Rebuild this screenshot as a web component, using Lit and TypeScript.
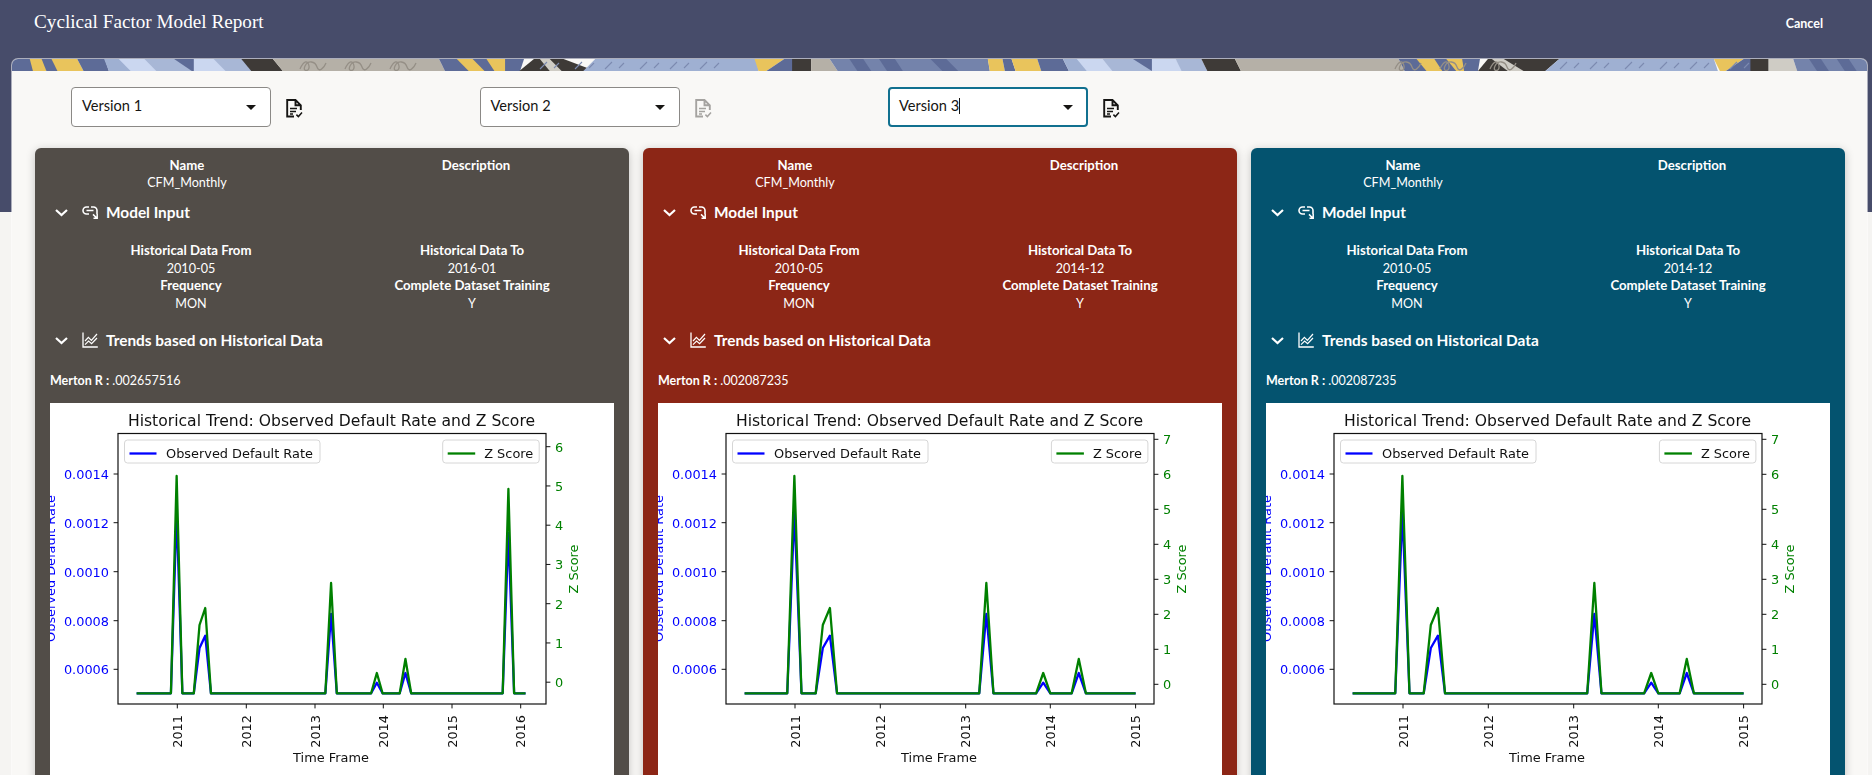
import { LitElement, html, css, svg } from "lit";
import { customElement, property } from "lit/decorators.js";

type Strip = [number, number, number, number, string];
const SLATE = "#5d6b97", YEL = "#e9c45c", BLUE = "#9fb0d2", PALE = "#cbd7f0", MID = "#a8b7d6", DARK = "#3e3a37", GRAY = "#b5b0a7", LGRAY = "#cfccc5", STR = "#7483ab";

// [topStart, topEnd, bottomStart, bottomEnd, colour] in page x
const z1 = (v: number) => 10 + v / 2.529;
const z2 = (v: number) => 630 + v / 2.529;
const z3 = (v: number) => 1250 + v / 2.522;
const mk = (f: (v: number) => number, rows: number[][], cols: string[]): Strip[] =>
  rows.map((r, i) => [f(r[0]), f(r[1]), f(r[2]), f(r[3]), cols[i]] as Strip);

const STRIPS: Strip[] = [
  ...mk(z1, [[0, 60, 0, 60], [50, 85, 58, 92], [80, 120, 92, 125], [105, 170, 120, 186], [170, 240, 186, 250], [238, 280, 250, 310],
    [275, 345, 305, 380], [340, 590, 370, 610], [415, 465, 460, 465], [465, 515, 465, 545], [585, 665, 610, 690], [665, 1085, 690, 1100],
    [1085, 1300, 1100, 1290], [1130, 1170, 1160, 1200], [1205, 1252, 1225, 1252], [1325, 1400, 1288, 1480], [1340, 1365, 1365, 1395], [1480, 1568, 1450, 1568]],
    [SLATE, YEL, SLATE, YEL, SLATE, BLUE, PALE, MID, SLATE, PALE, DARK, GRAY, SLATE, YEL, YEL, DARK, LGRAY, BLUE]),
  ...mk(z2, [[0, 320, 0, 325], [315, 390, 325, 345], [390, 415, 345, 415], [410, 458, 410, 458], [458, 505, 458, 525], [505, 905, 525, 910],
    [555, 590, 575, 610], [630, 670, 650, 690], [760, 800, 790, 830], [905, 942, 910, 948], [942, 965, 948, 975], [965, 1030, 975, 1040], [1030, 1095, 1040, 1110],
    [1095, 1135, 1110, 1165], [1130, 1195, 1155, 1225], [1195, 1320, 1220, 1320], [1272, 1320, 1320, 1320], [1320, 1380, 1320, 1400], [1380, 1445, 1395, 1460], [1445, 1530, 1460, 1545], [1530, 1568, 1545, 1568]],
    [BLUE, YEL, SLATE, DARK, GRAY, STR, SLATE, SLATE, SLATE, YEL, SLATE, YEL, SLATE, BLUE, PALE, MID, SLATE, PALE, MID, DARK, GRAY]),
  ...mk(z3, [[0, 375, 0, 390], [375, 580, 390, 575], [420, 465, 445, 485], [495, 535, 520, 540], [600, 780, 575, 745], [610, 640, 650, 690], [780, 1170, 745, 1180],
    [1170, 1245, 1185, 1200], [1245, 1265, 1200, 1265], [1262, 1308, 1262, 1308], [1308, 1370, 1308, 1380], [1370, 1556, 1380, 1556], [1410, 1440, 1430, 1460], [1480, 1510, 1500, 1530]],
    [GRAY, SLATE, YEL, YEL, DARK, LGRAY, BLUE, YEL, SLATE, DARK, LGRAY, STR, SLATE, SLATE]),
];

const SQUIGGLES = [300, 345, 390, 1395, 1440, 1490];
const DASHES = [540, 575, 605, 640, 670, 700, 1560, 1590, 1625, 1660, 1690, 1730];

const BASE = 290.3;
const GREEN: Record<number, number> = { 7: 73, 11: 222, 12: 205, 34: 180, 42: 270, 47: 256, 65: 86 };
const BLUE_L: Record<number, number> = { 7: 108, 11: 245, 12: 232.7, 34: 211, 42: 279.7, 47: 270, 65: 130 };

interface ChartCfg {
  step: number;
  count: number;
  years: [string, number][];
  right: [string, number][];
  legendZ: number;
}

const LEFT_TICKS: [string, number][] = [["0.0014", 71], ["0.0012", 119.7], ["0.0010", 168.7], ["0.0008", 217.7], ["0.0006", 266.3]];

@customElement("trend-chart")
class TrendChart extends LitElement {
  @property({ type: Object }) cfg!: ChartCfg;
  static styles = css`
    :host { display: block; background: #fff; height: 372px; overflow: hidden; }
    svg { display: block; width: 564px; height: 372px; filter: blur(0.45px); }
    text { font-family: "DejaVu Sans", sans-serif; font-size: 12.9px; fill: #111; }
    .title { font-size: 15.6px; text-anchor: middle; }
    .mid { text-anchor: middle; }
    .blue { fill: #0000ff; }
    .green { fill: #008000; }
    .end { text-anchor: end; }
    .spine { fill: none; stroke: #111; stroke-width: 1.2; }
    .tick { stroke: #111; stroke-width: 1; }
    .legend { fill: #fff; fill-opacity: 0.85; stroke: #d6d6d6; stroke-width: 1; }
    .l-blue { fill: none; stroke: #0000ff; stroke-width: 2.3; stroke-linejoin: round; }
    .l-green { fill: none; stroke: #008000; stroke-width: 2.3; stroke-linejoin: round; }
  `;
  private pts(vals: Record<number, number>) {
    const { step, count } = this.cfg;
    const out: string[] = [];
    for (let i = 0; i < count; i++) out.push(`${(86.6 + i * step).toFixed(2)},${vals[i] ?? BASE}`);
    return out.join(" ");
  }
  render() {
    const c = this.cfg;
    const zx = c.legendZ;
    return html`<svg viewBox="0 0 564 372">
      ${svg`
      <text class="title" x="281.5" y="23">Historical Trend: Observed Default Rate and Z Score</text>
      <polyline class="l-blue" points=${this.pts(BLUE_L)}></polyline>
      <polyline class="l-green" points=${this.pts(GREEN)}></polyline>
      <rect class="spine" x="68" y="30.5" width="428" height="270.5"></rect>
      ${LEFT_TICKS.map(([t, y]) => svg`<line class="tick" x1="63.6" x2="68" y1=${y} y2=${y}></line>
        <text class="blue end" x="59" y=${y + 4.8}>${t}</text>`)}
      ${c.right.map(([t, y]) => svg`<line class="tick" x1="496" x2="500.4" y1=${y} y2=${y}></line>
        <text class="green" x="505" y=${y + 4.8}>${t}</text>`)}
      ${c.years.map(([t, x]) => svg`<line class="tick" x1=${x} x2=${x} y1="301" y2="305.4"></line>
        <text class="end" transform="translate(${x + 4.6} 312) rotate(-90)">${t}</text>`)}
      <text class="mid" x="281" y="358.5">Time Frame</text>
      <text class="mid blue" transform="translate(5 165.5) rotate(-90)">Observed Default Rate</text>
      <text class="mid green" transform="translate(527.5 166) rotate(-90)">Z Score</text>
      <rect class="legend" x="74.5" y="37" width="195.5" height="23" rx="3"></rect>
      <line class="l-blue" x1="79.5" x2="106.5" y1="50.5" y2="50.5"></line>
      <text x="116" y="55.3">Observed Default Rate</text>
      <rect class="legend" x=${zx} y="37" width="96.5" height="23" rx="3"></rect>
      <line class="l-green" x1=${zx + 5} x2=${zx + 32.5} y1="50.5" y2="50.5"></line>
      <text x=${zx + 41.5} y="55.3">Z Score</text>
      `}
    </svg>`;
  }
}

const linkIcon = html`<svg class="ic" viewBox="0 0 16 13" width="16" height="13">
  <path d="M7 1H4.5a3.5 3.5 0 0 0 0 7H7M4.5 4.5h7M9 1h2.5A3.5 3.5 0 0 1 15 4.5V8" fill="none" stroke="#fff" stroke-width="1.6"></path>
  <path d="M11 8.4l4 3.8M15.2 8v4.2H11.5" fill="none" stroke="#fff" stroke-width="1.5"></path>
</svg>`;
const chartIcon = html`<svg class="ic" viewBox="0 0 16 16" width="16" height="16">
  <path d="M1 0.5V15H15.8" fill="none" stroke="#fff" stroke-width="1.3"></path>
  <path d="M3 9l3.4-3.6 3 3L15 2M3 12.6l3.6-3.6 3 2.6L15 6" fill="none" stroke="#fff" stroke-width="1.2"></path>
</svg>`;
const chevron = html`<svg class="chev" viewBox="0 0 13 8" width="13" height="8"><path d="M1 1l5.5 5L12 1" fill="none" stroke="#fff" stroke-width="2.2"></path></svg>`;
const docIcon = (dim: boolean) => html`<svg class="doc ${dim ? "dim" : ""}" viewBox="0 0 17 19" width="17" height="19">
  <path d="M8 17.5H1.2V1H9.5L14.8 6.3V11M9.5 1V6.3H14.8" fill="none" stroke="currentColor" stroke-width="1.9"></path>
  <path d="M4 9.5h7M4 12.5h6M4 15h3" fill="none" stroke="currentColor" stroke-width="1.5"></path>
  <path d="M10.4 15.6l2 2 3.6-4" fill="none" stroke="currentColor" stroke-width="1.5"></path>
</svg>`;

interface CardData { cls: string; to: string; merton: string; cfg: ChartCfg; }

const rightAxis = (labels: number, first: number, gap: number): [string, number][] =>
  Array.from({ length: labels }, (_, i) => [String(labels - 1 - i), first + gap * i] as [string, number]);

const cfg1: ChartCfg = {
  step: 5.72, count: 69, legendZ: 392.7,
  years: [["2011", 127.3], ["2012", 196.3], ["2013", 265], ["2014", 333.3], ["2015", 402], ["2016", 470.7]],
  right: rightAxis(7, 43.7, 39.25),
};
const cfg2: ChartCfg = {
  step: 7.11, count: 56, legendZ: 393.4,
  years: [["2011", 137], ["2012", 222.3], ["2013", 307.7], ["2014", 392.3], ["2015", 477.6]],
  right: rightAxis(8, 36.3, 35),
};
const CARDS: CardData[] = [
  { cls: "c1", to: "2016-01", merton: ".002657516", cfg: cfg1 },
  { cls: "c2", to: "2014-12", merton: ".002087235", cfg: cfg2 },
  { cls: "c3", to: "2014-12", merton: ".002087235", cfg: cfg2 },
];

@customElement("app-root")
class AppRoot extends LitElement {
  static styles = css`
    :host { display: block; height: 775px; overflow: hidden; font-family: Lato, "Noto Sans", sans-serif; }
    .page { height: 775px; overflow: hidden; display: flex; flex-direction: column;
      background: linear-gradient(#474c6a 0, #474c6a 212px, #f5f4f2 212px); }
    .top { flex: none; height: 59px; display: flex; justify-content: space-between; padding: 0 49px 0 34px; color: #fff; }
    .heading { font-family: "Liberation Serif", serif; font-size: 19.2px; line-height: 44px; }
    .cancel { font-size: 12.5px; font-weight: 700; line-height: 48px; }
    .modal { flex: 1; margin: 0 5px 0 12px; background: #f9f8f6; border-radius: 6px 6px 0 0; overflow: hidden;
      box-shadow: 0 0 0 1px rgba(255,255,255,.55); min-height: 0; }
    .banner { display: block; width: 1855px; height: 12px; }
    .versions { display: flex; padding: 16px 0 0 59px; height: 40px; }
    .vgroup { width: 408.5px; display: flex; align-items: center; gap: 15px; flex: none; }
    .select { box-sizing: border-box; width: 200px; height: 40px; background: #fff; border: 1px solid #8b8986; border-radius: 4px;
      display: flex; align-items: center; justify-content: space-between; padding: 0 14px 4px 10px; font-size: 14.6px; color: #161513; }
    .select.focus { border: 2px solid #11708f; padding-left: 9px; padding-right: 13px; }
    .caret { display: inline-block; width: 1px; height: 16px; background: #161513; vertical-align: -3px; }
    .arrow { width: 0; height: 0; border-left: 5.5px solid transparent; border-right: 5.5px solid transparent; border-top: 5.5px solid #161513; margin-top: 5px; }
    .doc { color: #161513; flex: none; margin-top: 2px; }
    .doc.dim { color: #a5a3a0; }
    .cards { display: flex; gap: 14.5px; padding: 21px 0 0 23px; }
    .card { box-sizing: border-box; width: 593.5px; height: 640px; flex: none; padding: 8px 15px 0; color: #fff; border-radius: 6px 6px 0 0;
      box-shadow: 0 2px 10px rgba(0,0,0,.22); font-size: 12.6px; }
    .c1 { background: #524d48; }
    .c2 { background: #8c2616; }
    .c3 { background: #04536f; }
    .top-grid { display: grid; grid-template-columns: 289px 289px; margin-left: -7.5px; text-align: center; line-height: 18px; }
    .in-grid { display: grid; grid-template-columns: 281px 281px; margin: 10px 0 0 0.5px; text-align: center; line-height: 17.6px; }
    .lbl { font-weight: 700; font-size: 13.2px; }
    .sec { height: 40px; display: flex; align-items: center; font-weight: 700; font-size: 15.4px; margin-left: 5px; }
    .sec.trends { margin-top: 8px; }
    .chev { flex: none; margin: 2px 14px 0 0; }
    .ic { flex: none; margin-right: 8px; }
    .merton { margin-top: 12px; line-height: 18px; font-size: 12.5px; }
    .merton .lbl { font-size: 12.5px; }
    trend-chart { margin-top: 13px; }
    .sq { fill: none; stroke: #958f86; stroke-width: 1.3; }
    .da { fill: none; stroke: #7c8ab0; stroke-width: 1.1; }
  `;
  private banner() {
    return html`<svg class="banner" viewBox="12 0 1855 12" preserveAspectRatio="none">
      ${STRIPS.map((s) => svg`<polygon fill=${s[4]} points="${s[0]},0 ${s[1]},0 ${s[3]},12 ${s[2]},12"></polygon>`)}
      ${SQUIGGLES.map((x) => svg`<path class="sq" d="M${x} 10c4-9 8-9 9-3s-7 6-4 0s10-5 12 1s7 1 9-4"></path>`)}
      ${DASHES.map((x) => svg`<path class="da" d="M${x} 10l7-7M${x + 14} 9l5-5"></path>`)}
    </svg>`;
  }
  private vgroup(label: string, focus: boolean, dim: boolean) {
    return html`<div class="vgroup">
      <div class="select ${focus ? "focus" : ""}"><span>${label}${focus ? html`<span class="caret"></span>` : ""}</span><span class="arrow"></span></div>
      ${docIcon(dim)}
    </div>`;
  }
  private card(c: CardData) {
    return html`<section class="card ${c.cls}">
      <div class="top-grid">
        <div class="lbl">Name</div><div class="lbl">Description</div>
        <div>CFM_Monthly</div><div></div>
      </div>
      <div class="sec">${chevron}${linkIcon}<span>Model Input</span></div>
      <div class="in-grid">
        <div class="lbl">Historical Data From</div><div class="lbl">Historical Data To</div>
        <div>2010-05</div><div>${c.to}</div>
        <div class="lbl">Frequency</div><div class="lbl">Complete Dataset Training</div>
        <div>MON</div><div>Y</div>
      </div>
      <div class="sec trends">${chevron}${chartIcon}<span>Trends based on Historical Data</span></div>
      <div class="merton"><span class="lbl">Merton R :</span> ${c.merton}</div>
      <trend-chart .cfg=${c.cfg}></trend-chart>
    </section>`;
  }
  render() {
    return html`<div class="page">
      <header class="top"><div class="heading">Cyclical Factor Model Report</div><div class="cancel">Cancel</div></header>
      <main class="modal">
        ${this.banner()}
        <div class="versions">
          ${this.vgroup("Version 1", false, false)}
          ${this.vgroup("Version 2", false, true)}
          ${this.vgroup("Version 3", true, false)}
        </div>
        <div class="cards">${CARDS.map((c) => this.card(c))}</div>
      </main>
    </div>`;
  }
}
